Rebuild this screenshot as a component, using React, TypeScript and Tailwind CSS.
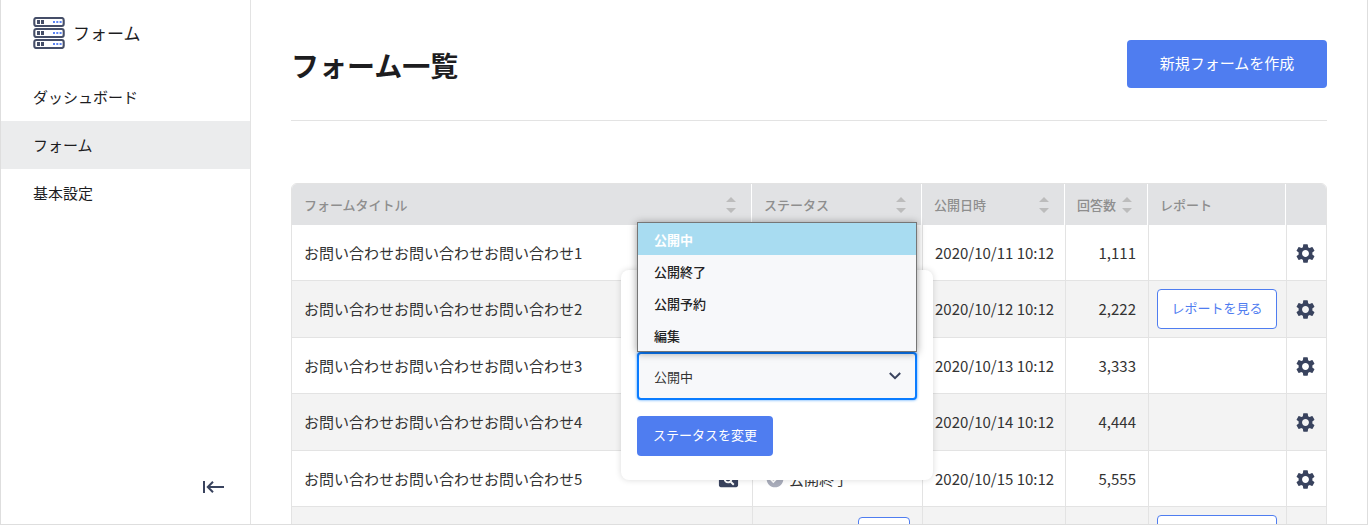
import { useState } from 'react'
import { MdCheckCircle, MdPageview, MdSettings } from 'react-icons/md'

type Row = { id: number; title: string; status: string; date: string; count: string; report: boolean }

const nav = ['ダッシュボード', 'フォーム', '基本設定']
const statuses = ['公開中', '公開終了', '公開予約', '編集']

const rows: Row[] = [
  { id: 1, title: 'お問い合わせお問い合わせお問い合わせ1', status: '公開中', date: '2020/10/11 10:12', count: '1,111', report: false },
  { id: 2, title: 'お問い合わせお問い合わせお問い合わせ2', status: '公開中', date: '2020/10/12 10:12', count: '2,222', report: true },
  { id: 3, title: 'お問い合わせお問い合わせお問い合わせ3', status: '公開中', date: '2020/10/13 10:12', count: '3,333', report: false },
  { id: 4, title: 'お問い合わせお問い合わせお問い合わせ4', status: '公開中', date: '2020/10/14 10:12', count: '4,444', report: false },
  { id: 5, title: 'お問い合わせお問い合わせお問い合わせ5', status: '公開終了', date: '2020/10/15 10:12', count: '5,555', report: false },
  { id: 6, title: 'お問い合わせお問い合わせお問い合わせ6', status: '公開中', date: '2020/10/16 10:12', count: '6,666', report: true },
]

function ServerLogo() {
  return (
    <svg width="32" height="32" viewBox="0 0 32 32" fill="none" aria-hidden="true">
      {[0, 11, 22].map((y) => (
        <g key={y} transform={`translate(0 ${y})`}>
          <rect x="1.300" y="1" width="29.4" height="8" rx="2" stroke="#454e68" strokeWidth="2.1" />
          <path d="M4 3h3v4H4zM8 3h3v4H8z" fill="#454e68" />
          <path d="M20 4h2v2h-2zM23.3 4h2v2h-2zM26.6 4h2v2h-2z" fill="#5b83f2" />
        </g>
      ))}
    </svg>
  )
}

function SortButton({ label }: { label: string }) {
  return (
    <button type="button" aria-label={`${label}で並べ替え`} className="shrink-0">
      <svg width="10" height="16" viewBox="0 0 10 16" fill="#bcbcbc" aria-hidden="true">
        <path d="M5 0l5 5H0zM5 16l5-5H0z" />
      </svg>
    </button>
  )
}

function HeadCell({ label, width, sort }: { label: string; width?: string; sort?: boolean }) {
  return (
    <th scope="col" className={`h-[41px] border-r border-white bg-[#e1e2e4] pr-[15px] pl-3 text-left text-[13px] font-medium text-[#8e8e8e] ${width ?? ''}`}>
      <div className="flex items-center justify-between">
        <span className="whitespace-nowrap">{label}</span>
        {sort && <SortButton label={label} />}
      </div>
    </th>
  )
}

function StatusPopover() {
  const [status, setStatus] = useState(statuses[0])

  return (
    <div className="absolute top-[87px] right-[394px] w-[312px] rounded-lg bg-white px-4 pt-[82px] pb-6 shadow-[0_0_6px_rgba(0,0,0,0.15)]">
      <div className="relative">
        <select
          aria-label="ステータス"
          value={status}
          onChange={(e) => setStatus(e.target.value)}
          className="block h-12 w-full appearance-none rounded border-2 border-[#0a7cff] bg-[#f7f8fa] px-[15px] pt-px text-[13px] text-[#333] shadow-[0_0_3px_#3f9bff] outline-none"
        >
          {statuses.map((s) => (
            <option key={s}>{s}</option>
          ))}
        </select>
        <svg className="pointer-events-none absolute top-5 right-4" width="12" height="8" viewBox="0 0 12 8" fill="none" stroke="#39435e" strokeWidth="2" aria-hidden="true">
          <path d="M.8 1L6 6.2 11.2 1" />
        </svg>

        {/* 選択肢の一覧 */}
        <ul role="listbox" aria-label="ステータスの選択肢" className="absolute bottom-full left-0 w-full border border-[#767676] bg-[#f7f8fa] text-[13px] shadow-[0_1px_8px_rgba(0,0,0,0.4)]">
          {statuses.map((s) => (
            <li
              key={s}
              role="option"
              aria-selected={s === status}
              onClick={() => setStatus(s)}
              className={`flex h-8 items-center px-4 pt-0.5 ${s === status ? 'bg-[#a8dcf1] font-bold text-white' : 'font-medium text-[#222]'}`}
            >
              {s}
            </li>
          ))}
        </ul>
      </div>
      <button type="button" className="mt-4 block h-10 w-[136px] rounded bg-[#4f7df0] pb-0.5 text-[13px] text-white">
        ステータスを変更
      </button>
    </div>
  )
}

function FormTable() {
  return (
    <div className="relative mt-[62px]">
      <div className="overflow-hidden rounded-t-md border border-[#e3e3e3]">
        <table className="w-full table-fixed border-separate border-spacing-0">
          <thead>
            <tr>
              <HeadCell label="フォームタイトル" sort />
              <HeadCell label="ステータス" width="w-[170px]" sort />
              <HeadCell label="公開日時" width="w-[143px]" sort />
              <HeadCell label="回答数" width="w-[83px]" sort />
              <HeadCell label="レポート" width="w-[138px]" />
              <th scope="col" aria-label="設定" className="w-10 bg-[#e1e2e4]" />
            </tr>
          </thead>
          <tbody className="text-[15px] leading-5 text-[#333] [&_td]:border-b [&_td]:border-[#e3e3e3] [&_td+td]:border-l">
            {rows.map((row) => (
              <tr key={row.id} className="h-14 odd:[&>td]:pt-px even:h-[57px] even:bg-[#f3f3f3]">
                <td className="px-3">
                  <div className="flex items-center justify-between">
                    <span>{row.title}</span>
                    <button type="button" aria-label="プレビュー" className="text-[#39435e]">
                      <MdPageview size={23} />
                    </button>
                  </div>
                </td>
                <td className="px-3">
                  <div className="flex items-center justify-between">
                    <span className="flex items-center gap-1">
                      <MdCheckCircle size={20} className={row.status === '公開終了' ? 'text-[#a9adbb]' : 'text-[#4f7df0]'} />
                      {row.status}
                    </span>
                    {row.status === '公開中' && (
                      <button type="button" className="h-9 w-[52px] rounded border border-[#4f7df0] bg-white text-[13px] text-[#4f7df0]">
                        変更
                      </button>
                    )}
                  </div>
                </td>
                <td className="pl-3 whitespace-nowrap">{row.date}</td>
                <td className="pr-3 text-right">{row.count}</td>
                <td className="px-2">
                  {row.report && (
                    <button type="button" className="block h-10 w-[120px] rounded border border-[#4f7df0] bg-white pb-0.5 text-[13px] text-[#4f7df0]">
                      レポートを見る
                    </button>
                  )}
                </td>
                <td className="pr-0.5">
                  <button type="button" aria-label="設定" className="mx-auto block text-[#39435e]">
                    <MdSettings size={23} />
                  </button>
                </td>
              </tr>
            ))}
          </tbody>
        </table>
      </div>
      <StatusPopover />
    </div>
  )
}

export default function App() {
  return (
    <div className="flex h-screen overflow-hidden border-x border-b border-[#dedede] bg-white font-['Noto_Sans_CJK_JP',sans-serif] text-[#1d1d1f]">
      <aside className="flex w-[250px] shrink-0 flex-col border-r border-[#e3e3e3]">
        <div className="flex h-[73px] items-start gap-2 pt-[17px] pl-8">
          <ServerLogo />
          <span className="text-[17px] leading-8">フォーム</span>
        </div>
        <nav className="text-[15px]">
          {nav.map((label, i) => (
            <a key={label} href="#" className={`flex h-12 items-center pl-8 ${i === 1 ? 'bg-[#ebeced]' : ''}`}>
              {label}
            </a>
          ))}
        </nav>
        <button type="button" aria-label="メニューを閉じる" className="mt-auto mr-[25px] mb-[29px] self-end">
          <svg width="24" height="16" viewBox="0 0 24 16" fill="none" stroke="#39435e" strokeWidth="2" aria-hidden="true">
            <path d="M3 2v12M6.500 8H23M12 2.800L6.800 8l5.200 5.200" />
          </svg>
        </button>
      </aside>

      <main className="min-w-0 flex-1 px-10 pt-10">
        <header className="flex items-center justify-between border-b border-[#e3e3e3] pb-8">
          <h1 className="pt-0.5 text-[28px] font-bold">フォーム一覧</h1>
          <button type="button" className="h-12 w-[200px] rounded bg-[#4f7df0] pb-0.5 text-[15px] text-white">
            新規フォームを作成
          </button>
        </header>
        <FormTable />
      </main>
    </div>
  )
}
